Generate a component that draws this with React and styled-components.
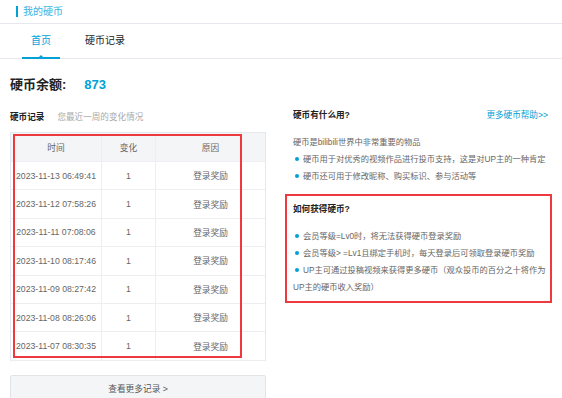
import React from 'react';
import styled, { createGlobalStyle } from 'styled-components';

const GlobalStyle = createGlobalStyle`
  html, body { margin: 0; padding: 0; background: #fff; }
  body { font-family: "Liberation Sans", "Noto Sans CJK SC", sans-serif; color: #666; }
  * { box-sizing: border-box; }
`;

const BLUE = '#00a1d6';
const RED = '#ee3a3f';

const Page = styled.div`
  width: 562px;
  height: 398px;
  overflow: hidden;
  background: #fff;
`;

const TopBar = styled.div`
  height: 24px;
  border-bottom: 1px solid #e5e9ef;
  padding: 1px 0 0 16px;
`;

const Title = styled.div`
  display: inline-block;
  border-left: 2px solid ${BLUE};
  padding-left: 5px;
  font-size: 10px;
  line-height: 11px;
  color: #3ab2e2;
`;

const Tabs = styled.div`
  height: 35px;
  border-bottom: 1px solid #e5e9ef;
  padding-left: 22px;
  display: flex;
  gap: 16px;
`;

const Tab = styled.div`
  position: relative;
  height: 34px;
  line-height: 34px;
  padding: 0 9px;
  font-size: 10px;
  color: ${p => (p.$active ? BLUE : '#222')};
  &::after {
    content: '';
    display: ${p => (p.$active ? 'block' : 'none')};
    position: absolute;
    left: 0;
    right: 0;
    bottom: -1px;
    height: 2px;
    background: ${BLUE};
  }
  &::before {
    content: '';
    display: ${p => (p.$active ? 'block' : 'none')};
    position: absolute;
    left: 50%;
    bottom: 1px;
    margin-left: -2px;
    border-left: 2px solid transparent;
    border-right: 2px solid transparent;
    border-bottom: 2px solid ${BLUE};
  }
`;

const Balance = styled.div`
  margin-top: 17px;
  padding-left: 10px;
  height: 18px;
  line-height: 18px;
  font-size: 13px;
  font-weight: bold;
  color: #222;
  display: flex;
  gap: 18px;
`;

const BalanceValue = styled.span`
  color: ${BLUE};
`;

const Main = styled.div`
  margin-top: 14px;
  padding: 0 10px;
  display: flex;
  gap: 19px;
  align-items: flex-start;
`;

const LeftCol = styled.div`
  width: 256px;
  flex: none;
`;

const SectionHead = styled.div`
  height: 18px;
  line-height: 18px;
  font-size: 8.6px;
  margin-bottom: 6px;
  display: flex;
  gap: 13px;
`;

const HeadTitle = styled.span`
  font-weight: bold;
  color: #222;
`;

const HeadSub = styled.span`
  color: #aaa;
`;

const TableWrap = styled.div`
  position: relative;
`;

const Grid = styled.div`
  display: grid;
  grid-template-columns: 91px 54px 1fr;
  grid-template-rows: 29px;
  grid-auto-rows: 28.4px;
  border: 1px solid #e5e9ef;
  border-bottom: none;
`;

const Cell = styled.div`
  display: flex;
  align-items: center;
  justify-content: center;
  font-size: 8.7px;
  color: #666;
  white-space: nowrap;
  border-bottom: 1px solid #eceef1;
  border-right: ${p => (p.$last ? 'none' : '1px solid #eceef1')};
  background: ${p => (p.$head ? '#f4f5f7' : '#fff')};
`;

const Highlight = styled.div`
  position: absolute;
  left: 3px;
  top: 2px;
  width: 229px;
  height: 224px;
  border: 2px solid ${RED};
  pointer-events: none;
`;

const MoreButton = styled.div`
  margin-top: 14px;
  height: 28px;
  line-height: 26px;
  border: 1px solid #e2e4e8;
  border-radius: 2px;
  background: #f4f5f7;
  text-align: center;
  font-size: 8.7px;
  color: #555;
`;

const RightCol = styled.div`
  width: 267px;
  flex: none;
`;

const RightHead = styled.div`
  display: flex;
  justify-content: space-between;
  padding: 0 4px 0 8px;
  height: 14px;
  line-height: 14px;
  font-size: 8.6px;
`;

const MoreLink = styled.span`
  color: ${BLUE};
`;

const TextBlock = styled.div`
  margin-top: 12px;
  padding: 0 2px 0 8px;
`;

const Line = styled.div`
  font-size: 8.25px;
  line-height: 17px;
  color: #666;
`;

const Dot = styled.span`
  display: inline-block;
  width: 4px;
  height: 4px;
  border-radius: 50%;
  background: ${BLUE};
  margin: 0 4px 0 2px;
  vertical-align: 1px;
`;

const HowBox = styled.div`
  margin-top: 9px;
  border: 2px solid ${RED};
  padding: 6px 2px 5px 6px;
`;

const BoxTitle = styled.div`
  font-size: 8.6px;
  line-height: 14px;
  font-weight: bold;
  color: #222;
  margin-bottom: 12px;
`;

const records = [
  '2023-11-13 06:49:41',
  '2023-11-12 07:58:26',
  '2023-11-11 07:08:06',
  '2023-11-10 08:17:46',
  '2023-11-09 08:27:42',
  '2023-11-08 08:26:06',
  '2023-11-07 08:30:35',
];

export default function App() {
  return (
    <Page>
      <GlobalStyle />
      <TopBar>
        <Title>我的硬币</Title>
      </TopBar>
      <Tabs>
        <Tab $active>首页</Tab>
        <Tab>硬币记录</Tab>
      </Tabs>
      <Balance>
        <span>硬币余额:</span>
        <BalanceValue>873</BalanceValue>
      </Balance>
      <Main>
        <LeftCol>
          <SectionHead>
            <HeadTitle>硬币记录</HeadTitle>
            <HeadSub>您最近一周的变化情况</HeadSub>
          </SectionHead>
          <TableWrap>
            <Grid>
              <Cell $head>时间</Cell>
              <Cell $head>变化</Cell>
              <Cell $head $last>原因</Cell>
              {records.map(t => (
                <React.Fragment key={t}>
                  <Cell>{t}</Cell>
                  <Cell>1</Cell>
                  <Cell $last>登录奖励</Cell>
                </React.Fragment>
              ))}
            </Grid>
            <Highlight />
          </TableWrap>
          <MoreButton>查看更多记录 &gt;</MoreButton>
        </LeftCol>
        <RightCol>
          <RightHead>
            <HeadTitle>硬币有什么用?</HeadTitle>
            <MoreLink>更多硬币帮助&gt;&gt;</MoreLink>
          </RightHead>
          <TextBlock>
            <Line>硬币是bilibili世界中非常重要的物品</Line>
            <Line><Dot />硬币用于对优秀的视频作品进行投币支持，这是对UP主的一种肯定</Line>
            <Line><Dot />硬币还可用于修改昵称、购买标识、参与活动等</Line>
          </TextBlock>
          <HowBox>
            <BoxTitle>如何获得硬币?</BoxTitle>
            <Line><Dot />会员等级=Lv0时，将无法获得硬币登录奖励</Line>
            <Line><Dot />会员等级&gt; =Lv1且绑定手机时，每天登录后可领取登录硬币奖励</Line>
            <Line><Dot />UP主可通过投稿视频来获得更多硬币（观众投币的百分之十将作为UP主的硬币收入奖励）</Line>
          </HowBox>
        </RightCol>
      </Main>
    </Page>
  );
}
